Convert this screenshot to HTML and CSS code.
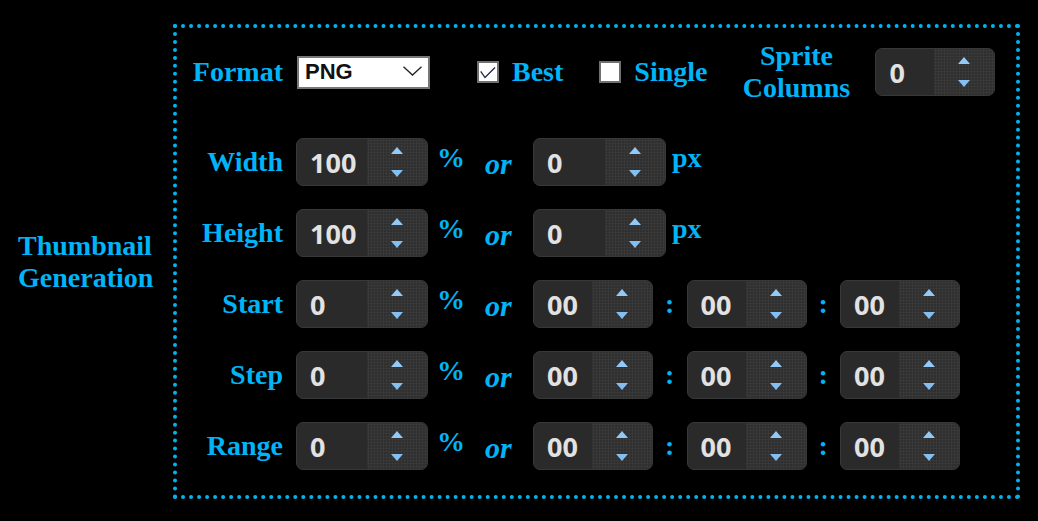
FILE: index.html
```html
<!DOCTYPE html>
<html>
<head>
<meta charset="utf-8">
<link rel="stylesheet" href="styles.css">
</head>
<body>
<div class="wrap">
  <div class="side">Thumbnail<br>Generation</div>
  <div class="box">
    <div class="toprow">
      <div class="lbl">Format</div>
      <div class="select"><span class="selval">PNG</span><svg class="chev" width="19" height="10" viewBox="0 0 19 10"><polyline points="0.5,0.8 9.5,9 18.5,0.8" fill="none" stroke="#222" stroke-width="1.3"/></svg></div>
      <div class="cb cb-best"><svg width="18" height="18" viewBox="0 0 18 18"><polyline points="1.7,8.3 6,14.5 16,4.5" fill="none" stroke="#1b2a44" stroke-width="1.3"/></svg></div>
      <div class="cbtext">Best</div>
      <div class="cb cb-single"></div>
      <div class="cbtext">Single</div>
      <div class="sprite">Sprite<br>Columns</div>
      <div class="spin w120"><span class="val">0</span><span class="btns"><i class="up"></i><i class="dn"></i></span></div>
    </div>
    <div class="rows">
      <div class="row">
        <div class="lbl">Width</div>
        <div class="spin w132"><span class="val">100</span><span class="btns"><i class="up"></i><i class="dn"></i></span></div>
        <div class="pct">%</div>
        <div class="or">or</div>
        <div class="spin w133"><span class="val">0</span><span class="btns"><i class="up"></i><i class="dn"></i></span></div>
        <div class="px">px</div>
      </div>
      <div class="row">
        <div class="lbl">Height</div>
        <div class="spin w132"><span class="val">100</span><span class="btns"><i class="up"></i><i class="dn"></i></span></div>
        <div class="pct">%</div>
        <div class="or">or</div>
        <div class="spin w133"><span class="val">0</span><span class="btns"><i class="up"></i><i class="dn"></i></span></div>
        <div class="px">px</div>
      </div>
      <div class="row">
        <div class="lbl">Start</div>
        <div class="spin w132"><span class="val">0</span><span class="btns"><i class="up"></i><i class="dn"></i></span></div>
        <div class="pct">%</div>
        <div class="or">or</div>
        <div class="spin w120"><span class="val">00</span><span class="btns"><i class="up"></i><i class="dn"></i></span></div>
        <div class="colon">:</div>
        <div class="spin w120"><span class="val">00</span><span class="btns"><i class="up"></i><i class="dn"></i></span></div>
        <div class="colon">:</div>
        <div class="spin w120"><span class="val">00</span><span class="btns"><i class="up"></i><i class="dn"></i></span></div>
      </div>
      <div class="row">
        <div class="lbl">Step</div>
        <div class="spin w132"><span class="val">0</span><span class="btns"><i class="up"></i><i class="dn"></i></span></div>
        <div class="pct">%</div>
        <div class="or">or</div>
        <div class="spin w120"><span class="val">00</span><span class="btns"><i class="up"></i><i class="dn"></i></span></div>
        <div class="colon">:</div>
        <div class="spin w120"><span class="val">00</span><span class="btns"><i class="up"></i><i class="dn"></i></span></div>
        <div class="colon">:</div>
        <div class="spin w120"><span class="val">00</span><span class="btns"><i class="up"></i><i class="dn"></i></span></div>
      </div>
      <div class="row">
        <div class="lbl">Range</div>
        <div class="spin w132"><span class="val">0</span><span class="btns"><i class="up"></i><i class="dn"></i></span></div>
        <div class="pct">%</div>
        <div class="or">or</div>
        <div class="spin w120"><span class="val">00</span><span class="btns"><i class="up"></i><i class="dn"></i></span></div>
        <div class="colon">:</div>
        <div class="spin w120"><span class="val">00</span><span class="btns"><i class="up"></i><i class="dn"></i></span></div>
        <div class="colon">:</div>
        <div class="spin w120"><span class="val">00</span><span class="btns"><i class="up"></i><i class="dn"></i></span></div>
      </div>
    </div>
  </div>
</div>
</body>
</html>
```

FILE: styles.css
```css
html, body {
  margin: 0;
  padding: 0;
  background: #000;
}
body {
  width: 1038px;
  height: 521px;
  overflow: hidden;
  font-family: "Liberation Serif", "Times New Roman", serif;
  color: #00b4f8;
}
.wrap {
  display: flex;
  align-items: center;
  padding: 24px 0 0 18px;
}
.side {
  width: 155px;
  font-weight: bold;
  font-size: 28px;
  line-height: 32px;
}
.box {
  width: 847px;
  box-sizing: border-box;
  border: 4px dotted #00b4f0;
  padding: 20px 0 25px 0;
}
.toprow {
  display: flex;
  align-items: center;
  height: 48px;
  margin-bottom: 42px;
}
.rows {
  display: flex;
  flex-direction: column;
  gap: 23px;
}
.row {
  display: flex;
  align-items: center;
  height: 48px;
}
.lbl {
  width: 106px;
  margin-right: 13px;
  text-align: right;
  font-weight: bold;
  font-size: 28px;
  line-height: 32px;
  white-space: nowrap;
}
.select {
  width: 133px;
  height: 33px;
  box-sizing: border-box;
  margin-left: 1px;
  border: 2px solid #777;
  background: #fff;
  display: flex;
  align-items: center;
  padding: 0 6px 0 6px;
}
.selval {
  font-family: "Liberation Sans", Arial, sans-serif;
  font-weight: bold;
  font-size: 22px;
  color: #111;
}
.chev {
  margin-left: auto;
  margin-top: -2px;
}
.cb {
  width: 22px;
  height: 22px;
  box-sizing: border-box;
  border: 2px solid #707070;
  background: #fff;
  display: flex;
}
.cb-best {
  margin-left: 47px;
}
.cb-single {
  margin-left: 36px;
}
.cbtext {
  margin-left: 13px;
  font-weight: bold;
  font-size: 28px;
  line-height: 32px;
}
.sprite {
  margin-left: 35px;
  width: 108px;
  text-align: center;
  font-weight: bold;
  font-size: 28px;
  line-height: 32px;
}
.toprow .spin {
  margin-left: 25px;
}
.spin {
  display: flex;
  height: 48px;
  box-sizing: border-box;
  border: 1px solid #383838;
  border-radius: 7px;
  background: #2a2a2a;
  overflow: hidden;
  flex: none;
}
.w120 { width: 120px; }
.w132 { width: 132px; }
.w133 { width: 133px; }
.val {
  flex: 1;
  display: flex;
  align-items: center;
  padding-left: 13px;
  font-family: "Open Sans", "Noto Sans", sans-serif;
  font-weight: 700;
  font-size: 27px;
  color: #e2e2e2;
}
.btns {
  width: 60px;
  flex: none;
  display: flex;
  flex-direction: column;
  align-items: center;
  justify-content: space-between;
  padding: 8px 0 8px 0;
  box-sizing: border-box;
  background-color: #2f2f2f;
  background-image: radial-gradient(circle, #3c3c3c 0.9px, transparent 1.1px);
  background-size: 3px 3px;
}
.up, .dn {
  display: block;
  width: 0;
  height: 0;
  border-left: 6px solid transparent;
  border-right: 6px solid transparent;
}
.up {
  border-bottom: 7px solid #92c9f6;
}
.dn {
  border-top: 7px solid #84bff2;
}
.pct {
  width: 57px;
  box-sizing: border-box;
  padding: 0 0 8px 9px;
  font-weight: bold;
  font-size: 28px;
  line-height: 32px;
}
.or {
  width: 48px;
  box-sizing: border-box;
  padding-top: 3px;
  font-weight: bold;
  font-style: italic;
  font-size: 30px;
}
.px {
  margin-left: 6px;
  padding-bottom: 8px;
  font-weight: bold;
  font-size: 28px;
  line-height: 32px;
}
.colon {
  width: 33.5px;
  text-align: center;
  font-weight: bold;
  font-size: 28px;
  line-height: 32px;
}
```
